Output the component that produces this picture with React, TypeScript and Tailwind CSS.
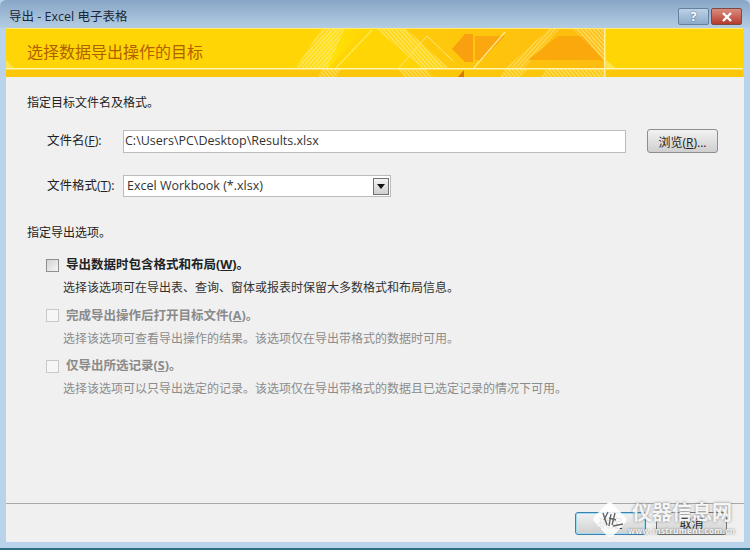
import React from "react";

const cjk = "font-['Open_Sans','Noto_Sans_CJK_SC',sans-serif]";

function Banner() {
  return (
    <svg className="absolute inset-0" width="737" height="49" viewBox="0 0 737 49" fill="none">
      <defs>
        <pattern id="hatch" width="3" height="3" patternUnits="userSpaceOnUse" patternTransform="rotate(42)">
          <rect width="1.4" height="3" fill="#ffe780" />
        </pattern>
        <pattern id="hatch2" width="3" height="3" patternUnits="userSpaceOnUse" patternTransform="rotate(-42)">
          <rect width="1.4" height="3" fill="#ffe780" />
        </pattern>
        <linearGradient id="amber" x1="0" x2="1" y1="0" y2="0">
          <stop offset="0" stopColor="#fecb0a" />
          <stop offset="1" stopColor="#fdbc10" />
        </linearGradient>
        <linearGradient id="glow" x1="0" x2="1" y1="0" y2="0">
          <stop offset="0" stopColor="#ffd505" />
          <stop offset=".5" stopColor="#ffe208" />
          <stop offset="1" stopColor="#ffd505" />
        </linearGradient>
      </defs>
      <path d="M283 41L326 0H360L322 41Z" fill="url(#glow)" />
      <path d="M399 0H598V41H441Z" fill="url(#amber)" />
      <path d="M316 0H339L321 41H289Z" fill="url(#hatch)" opacity=".85" />
      <path d="M369 0H399L444 41H417Z" fill="url(#hatch2)" opacity=".85" />
      <path d="M446 21L459 6H467V34H459Z" fill="#f99f10" />
      <path d="M469 8H499L476 32H469Z" fill="#fba70f" />
      <path d="M499 41L544 0H554L517 41Z" fill="url(#hatch)" opacity=".7" />
      <path d="M522 32L552 8H577L597 32Z" fill="#fba80c" />
      <path d="M566 0H598V32Z" fill="url(#hatch2)" opacity=".8" />
      <path d="M0 32L9 41H0Z" fill="#ffe34d" />
      <path d="M600 32L611 41H600Z" fill="#ffe34d" />
      <path d="M329 41L366 2" stroke="#ffe950" strokeWidth="1.4" />
      <path d="M392 41L421 8L447 33" stroke="#ffe680" strokeWidth="1" />
      <path d="M467 41L499 4" stroke="#ffeb8c" strokeWidth="1.2" />
      <rect x="0" y="41" width="737" height="8" fill="#fcc60a" />
      <path d="M316 41H335L330 49H312ZM392 41H420L428 49H398ZM499 41H522L515 49H494ZM540 41H598V49H535Z" fill="url(#hatch2)" opacity=".75" />
      <path d="M458 42L452 49H458Z" fill="#d9780a" />
      <rect x="0" y="0" width="737" height="1" fill="#ffe874" />
      <rect x="0" y="40" width="737" height="1.5" fill="#fff5b0" />
      <rect x="598" y="0" width="1.5" height="49" fill="#fff0a0" />
    </svg>
  );
}

function Option({ title, hot, desc, off }: { title: string; hot: string; desc: string; off?: boolean }) {
  return (
    <div className="flex flex-col gap-[6px]">
      <div className="flex items-center gap-[7px]">
        <span className={`w-[13px] h-[13px] border ${off ? "border-[#c8c8c8] bg-[#f6f6f6]" : "border-[#8e8f8f] bg-gradient-to-br from-[#d4d4d4] to-[#f6f6f6]"}`} />
        <span className={`text-[12.5px] leading-[18px] font-bold ${off ? "text-[#8a8a8a]" : "text-[#222]"}`}>
          {title}(<span className="underline">{hot}</span>)。
        </span>
      </div>
      <div className={`pl-[17px] text-[12px] leading-[16px] ${off ? "text-[#8c8c8c]" : "text-[#333]"}`}>{desc}</div>
    </div>
  );
}

function FooterButton({ label, primary }: { label: string; primary?: boolean }) {
  return (
    <div className={`w-[71px] h-[23px] rounded-[3px] border flex items-center justify-center text-[12px] bg-gradient-to-b from-[#f2f2f2] to-[#cfcfcf] text-[#222] ${primary ? "border-[#3c7fb1] shadow-[inset_0_0_0_1px_#9fdcf0]" : "border-[#707070]"}`}>
      {label}
    </div>
  );
}

export default function App() {
  return (
    <div className={`relative w-[750px] h-[550px] overflow-hidden flex flex-col bg-[#b9d3ea] ${cjk}`}>
      <div className="h-[28px] shrink-0 flex justify-between bg-gradient-to-b from-[#87a5c6] to-[#b4cde4] pl-[9px] pr-[8px] rounded-t-[6px]">
        <span className="text-[12.5px] leading-[17px] pt-[8px] text-[#1c2733]">导出 - Excel 电子表格</span>
        <div className="flex gap-[2px] pt-[8px] h-[26px]">
          <div className="w-[31px] h-[17px] rounded-[2px] border border-[#64809c] bg-gradient-to-b from-[#bcd2e8] to-[#8eabc9] text-white text-[12px] font-bold leading-[15px] text-center [text-shadow:0_0_2px_#34506c]">?</div>
          <div className="w-[31px] h-[17px] rounded-[2px] border border-[#7c4a44] bg-gradient-to-b from-[#d98b80] to-[#b53a2c] flex items-center justify-center">
            <svg width="12" height="10" viewBox="0 0 12 10"><path d="M2 1L10 9M10 1L2 9" stroke="#fff" strokeWidth="2.4" /></svg>
          </div>
        </div>
      </div>

      <div className="flex-1 min-h-0 mx-[6px] flex flex-col bg-[#f0f0f0]">
        <div className="relative h-[49px] shrink-0 bg-[#ffd505]">
          <Banner />
          <div className="relative pl-[21px] pt-[12px] text-[16px] leading-[24px] text-[#b25f00]">选择数据导出操作的目标</div>
        </div>

        <div className="flex-1 flex flex-col pl-[21px] pt-[17px] text-[12px] text-[#222]">
          <div className="leading-[18px]">指定目标文件名及格式。</div>

          <div className="flex items-center mt-[17px] pl-[20px] pr-[25px]">
            <span className="w-[76px] leading-[18px] text-[12.5px]">文件名(<span className="underline">F</span>):</span>
            <div className="w-[503px] h-[23px] bg-white border border-[#bcbcbc] pl-[1px] text-[12.5px] leading-[20px] text-[#333]">C:\Users\PC\Desktop\Results.xlsx</div>
            <div className="ml-[21px] w-[71px] h-[24px] rounded-[3px] border border-[#8e8e8e] bg-gradient-to-b from-[#f2f2f2] to-[#cfcfcf] flex items-center justify-center pt-[3px]">浏览(<span className="underline">R</span>)...</div>
          </div>

          <div className="flex items-center mt-[22px] pl-[20px]">
            <span className="w-[76px] leading-[18px] text-[12.5px]">文件格式(<span className="underline">T</span>):</span>
            <div className="w-[268px] h-[22px] bg-white border border-[#bcbcbc] pl-[3px] pr-[1px] flex items-center justify-between text-[12.5px] text-[#333]">
              <span>Excel Workbook (*.xlsx)</span>
              <span className="w-[16px] h-[17px] border border-[#707070] bg-gradient-to-b from-[#f4f4f4] to-[#cfcfcf] flex items-center justify-center">
                <svg width="8" height="5" viewBox="0 0 8 5"><path d="M0 0H8L4 5Z" fill="#111" /></svg>
              </span>
            </div>
          </div>

          <div className="leading-[18px] mt-[27px]">指定导出选项。</div>

          <div className="flex flex-col gap-[10.5px] mt-[14px] pl-[19px]">
            <Option title="导出数据时包含格式和布局" hot="W" desc="选择该选项可在导出表、查询、窗体或报表时保留大多数格式和布局信息。" />
            <Option off title="完成导出操作后打开目标文件" hot="A" desc="选择该选项可查看导出操作的结果。该选项仅在导出带格式的数据时可用。" />
            <Option off title="仅导出所选记录" hot="S" desc="选择该选项可以只导出选定的记录。该选项仅在导出带格式的数据且已选定记录的情况下可用。" />
          </div>
        </div>

        <div className="h-[39px] shrink-0 border-t border-[#a8a8a8] flex justify-end gap-[10px] pt-[8px] pr-[17px]">
          <FooterButton primary label="确定" />
          <FooterButton label="取消" />
        </div>
      </div>
      <div className="h-[8px] shrink-0 border-b-2 border-[#2f6f86]" />

      <div className="absolute left-[592px] top-[500px] w-[150px] h-[40px] pointer-events-none">
        <svg className="absolute left-0 top-[1px]" width="36" height="37" viewBox="0 0 36 37">
          <path d="M16 1.5Q18 0.5 20 2L34 17Q35.5 19 34 21L21 35Q18 37 15 35L2 20Q0.5 18 2 16Z" fill="#fff" fillOpacity=".88" />
          <path d="M11 12L15 24M16 11L12 19M19 13L17 25M23 12L20 24M17 17L24 19M21 25L31 23" stroke="#666" strokeWidth="1.4" fill="none" />
        </svg>
        <div className="absolute left-[40px] top-0 text-[20px] leading-[26px] font-bold text-white/90 whitespace-nowrap [text-shadow:0_0_3px_rgba(90,90,90,0.75)]">仪器信息网</div>
        <div className="absolute left-[36px] top-[26px] text-[8px] leading-[10px] font-bold tracking-[0.4px] text-white/90 whitespace-nowrap [text-shadow:0_0_2px_rgba(70,70,70,0.8)]">www.instrument.com.cn</div>
      </div>
    </div>
  );
}
